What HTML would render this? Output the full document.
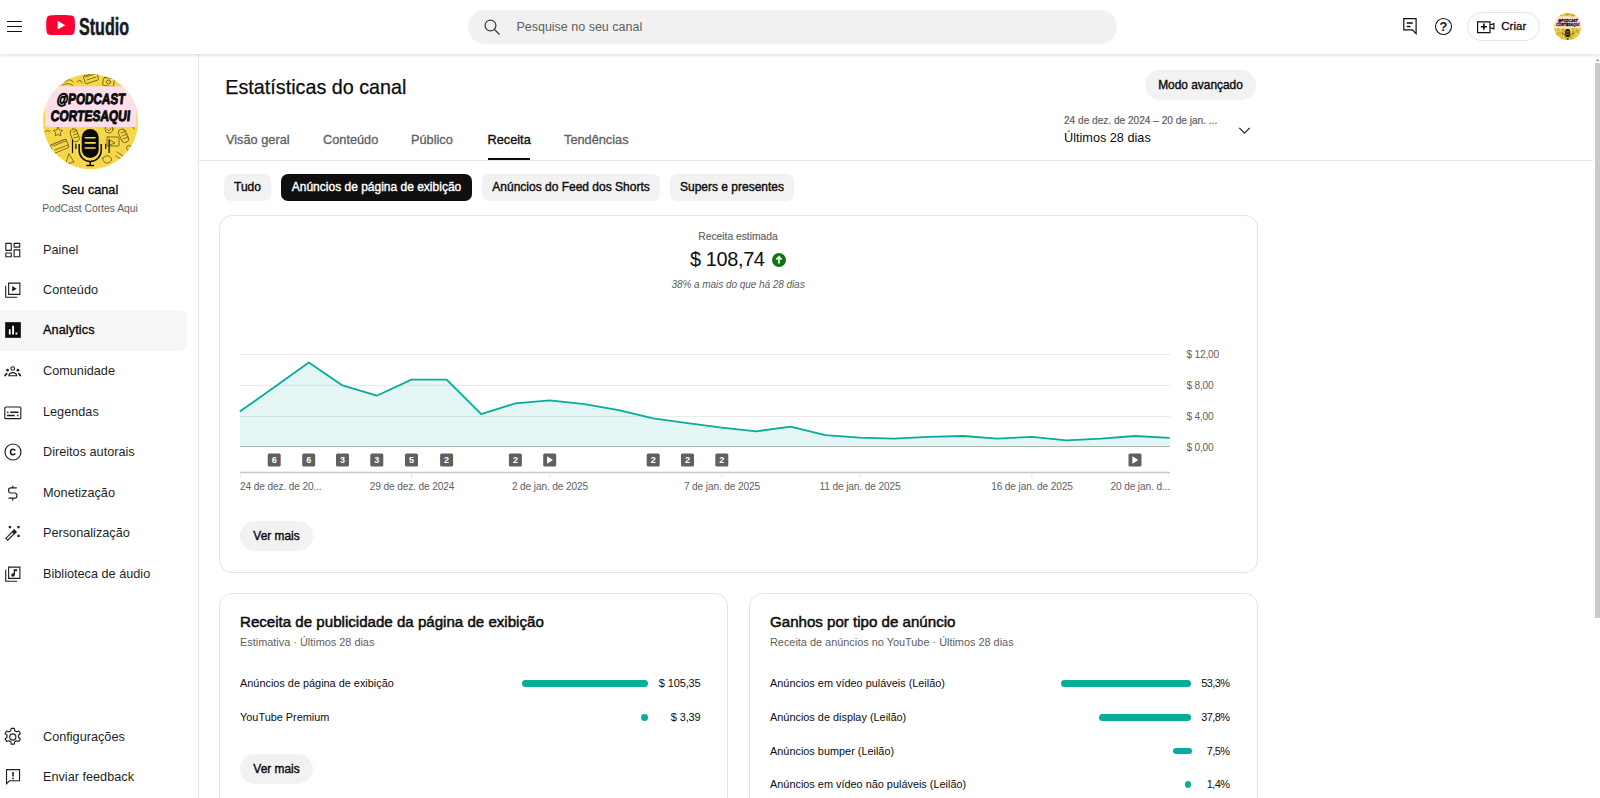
<!DOCTYPE html>
<html lang="pt-BR">
<head>
<meta charset="utf-8">
<title>Estatísticas do canal - YouTube Studio</title>
<style>
*{box-sizing:border-box;margin:0;padding:0}
html,body{width:1600px;height:798px;overflow:hidden;background:#fff}
body{font-family:"Liberation Sans",sans-serif;color:#0d0d0d;position:relative;-webkit-font-smoothing:antialiased}
.abs{position:absolute}
svg{display:block}
/* ---------- header ---------- */
#hdr{position:absolute;left:0;top:0;width:1600px;height:54px;background:#fff;z-index:5;box-shadow:0 1px 4px rgba(0,0,0,.16)}
#burger{position:absolute;left:7px;top:19px;width:15px;height:14px}
#burger i{position:absolute;left:0;width:15px;height:1px;background:#111}
#logo{position:absolute;left:46.400px;top:14.900px}
#studio{position:absolute;left:79.200px;top:12.700px;font-weight:bold;font-size:24px;color:#1a1a1a;-webkit-text-stroke:.55px #1a1a1a;transform:scaleX(.67);transform-origin:0 0;line-height:28px}
#search{position:absolute;left:468px;top:9.800px;width:648.500px;height:33.800px;border-radius:17px;background:#f1f1f1}
#search span{position:absolute;left:48.400px;top:9.900px;font-size:12.5px;color:#606060;line-height:15px}
#criar{position:absolute;left:1467.300px;top:11.600px;width:72.300px;height:29.800px;border:1px solid #e4e4e4;border-radius:15px}
#criar span{position:absolute;left:33px;top:6.600px;font-size:11.500px;-webkit-text-stroke:.3px #0d0d0d;color:#0d0d0d;line-height:15px}
/* ---------- sidebar ---------- */
#side{position:absolute;left:0;top:54px;width:198.800px;height:744px;border-right:1.600px solid #e9e9e9;background:#fff}
.nav{position:absolute;left:0;width:187px;height:40px}
.nav span{position:absolute;left:43px;top:12.500px;font-size:12.700px;line-height:16px;color:#1f1f1f;white-space:nowrap}
.nav svg{position:absolute;left:3px;top:10.500px}
.nav.sel{background:#f6f6f6;border-radius:0 8px 8px 0}
.nav.sel span{-webkit-text-stroke:.35px #0d0d0d;color:#0d0d0d;letter-spacing:.1px}
/* ---------- main ---------- */
#title{position:absolute;left:225.300px;top:75px;font-size:19.750px;line-height:24px;color:#0d0d0d;-webkit-text-stroke:.25px #0d0d0d;white-space:nowrap}
.pill{position:absolute;height:30px;border-radius:15px;background:#f2f2f2;font-size:11.9px;-webkit-text-stroke:.4px #0d0d0d;color:#0d0d0d;text-align:center;line-height:30px;white-space:nowrap}
.tab{position:absolute;top:131.500px;font-size:12.750px;line-height:16px;color:#606060;-webkit-text-stroke:.3px #606060;white-space:nowrap}
.chip{position:absolute;top:174.400px;height:27px;border-radius:7px;background:#f2f2f2;font-size:12px;-webkit-text-stroke:.38px;line-height:27px;text-align:center;color:#0d0d0d;white-space:nowrap}
.card{position:absolute;border:1px solid #e3e3e3;border-radius:13px;background:#fff}
.ct{position:absolute;font-size:15.100px;-webkit-text-stroke:.5px #0d0d0d;line-height:20px;color:#0d0d0d;white-space:nowrap}
.cs{position:absolute;font-size:10.900px;line-height:14px;color:#606060;white-space:nowrap}
.rl{position:absolute;font-size:10.900px;line-height:14px;color:#0d0d0d;white-space:nowrap}
.rv{position:absolute;font-size:10.970px;letter-spacing:-.13px;line-height:14px;color:#0d0d0d;white-space:nowrap;text-align:right;width:60px}
.rv.pv{letter-spacing:-.6px}
.bar{position:absolute;height:6.750px;border-radius:3.400px;background:#08ac9b}
.xl{position:absolute;top:480.700px;font-size:10.125px;letter-spacing:-.115px;line-height:12px;color:#606060;white-space:nowrap}
.yl{position:absolute;left:1186.500px;font-size:10.125px;letter-spacing:-.2px;line-height:12px;color:#606060;white-space:nowrap}
</style>
</head>
<body>

<svg width="0" height="0" style="position:absolute">
  <defs>
    <clipPath id="avc"><circle cx="47.500" cy="47.500" r="47.500"/></clipPath>
    <symbol id="avatar" viewBox="0 0 95 95">
      <g clip-path="url(#avc)">
        <rect width="95" height="95" fill="#f6d74a"/>
        <!-- doodles -->
        <g fill="none" stroke="#4a3d08" stroke-width=".9" stroke-opacity=".75" stroke-linecap="round" stroke-linejoin="round">
          <rect x="41" y="0" width="14" height="8" rx="1.500" transform="rotate(-18 48 4)"/>
          <path d="M43 3l9-3M44 6l9-3"/>
          <rect x="60" y="4" width="11" height="8" rx="1.500" transform="rotate(8 65 8)"/>
          <circle cx="65.500" cy="8" r="2"/>
          <path d="M22 8c2-3 6-3 8 0M20 11c3-2 8-2 10 1"/>
          <path d="M34 8l3-2 2 3"/>
          <rect x="28" y="55" width="7" height="13" rx="3.500" transform="rotate(-20 31 61)"/>
          <path d="M30 58l4-1.500M30.500 61l4-1.500M31 64l4-1.500"/>
          <path d="M15 53l1.500 3 3 .5-2.200 2.200.5 3.200-2.800-1.500-2.800 1.500.5-3.200-2.200-2.200 3-.5z"/>
          <rect x="8" y="68" width="17" height="9" rx="1.500" transform="rotate(-22 16 72)"/>
          <path d="M10 72l13-5M12 76l13-5"/>
          <rect x="77" y="55" width="7" height="14" rx="3.500" transform="rotate(-25 80 62)"/>
          <path d="M78 59l5-2M79 62l5-2M80 65l5-2"/>
          <circle cx="66" cy="55" r="4"/><path d="M64 55l2 2 2-3"/>
          <rect x="64" y="63" width="12" height="9" rx="1"/><path d="M67 66l5 3-5 2z"/>
          <path d="M26 80l5 8-8 2z"/><path d="M60 84c2-3 6-3 8 0s-2 5-4 5-5-2-4-5z"/>
          <path d="M74 78l6 4M73 82l6 4"/><circle cx="86" cy="74" r="2.500"/>
          <path d="M3 40c2-2 4-1 4 2s-2 5-4 4M2 58c1-2 4-2 5 0"/>
          <path d="M88 50l3 5M90 44l2 4"/>
        </g>
        <!-- pink banner -->
        <rect x="2" y="12.300" width="91.500" height="40.600" rx="3.500" fill="#fcdfe9"/>
        <g font-family="Liberation Sans" font-weight="bold" font-size="15" fill="#0b0b0b" stroke="#0b0b0b" stroke-width="1" stroke-linejoin="round" transform="skewX(-6) translate(3.800 0)">
          <text x="12.900" y="30.300" textLength="68.300" lengthAdjust="spacingAndGlyphs">@PODCAST</text>
          <text x="8.400" y="46.600" textLength="79.500" lengthAdjust="spacingAndGlyphs">CORTESAQUI</text>
        </g>
        <!-- microphone -->
        <rect x="38.700" y="54.900" width="17" height="29" rx="8.500" fill="#0b0b0b"/>
        <path d="M42.300 63.700h9.800M42.300 68.900h9.800M42.300 74h9.800" stroke="#f6d74a" stroke-width="1.600" stroke-linecap="round"/>
        <path d="M36.200 70v6.500a11 11 0 0 0 22 0V70" fill="none" stroke="#0b0b0b" stroke-width="1.500"/>
        <path d="M47.200 87.500v4M43.300 91.500h7.800" stroke="#0b0b0b" stroke-width="1.500"/>
        <path d="M29.500 65.600v13.500M32.900 69.700v5.400M62.700 69.700v5.400M66.100 65.600v13.500" stroke="#0b0b0b" stroke-width="1.200"/>
      </g>
    </symbol>
  </defs>
</svg>

<!-- ================= HEADER ================= -->
<div id="hdr">
  <div id="burger"><i style="top:2px"></i><i style="top:7px"></i><i style="top:12px"></i></div>
  <svg id="logo" width="29.200" height="20.400" viewBox="0 0 30 21" preserveAspectRatio="none"><path d="M29.2 3.3C28.9 2 27.9 1 26.6.6 24.3 0 15 0 15 0S5.700 0 3.400.6C2.100 1 1.100 2 .8 3.300.2 5.600.2 10.500.2 10.500s0 4.900.6 7.200c.3 1.300 1.300 2.300 2.600 2.700C5.700 21 15 21 15 21s9.300 0 11.600-.6c1.300-.4 2.300-1.400 2.600-2.700.6-2.300.6-7.200.6-7.200s0-4.900-.6-7.200z" fill="#ff0033"/><path d="M12 15l7.800-4.500L12 6z" fill="#fff"/></svg>
  <div id="studio">Studio</div>

  <div id="search">
    <svg class="abs" style="left:15px;top:8px" width="18" height="18" viewBox="0 0 18 18" fill="none" stroke="#3a3a3a" stroke-width="1.2"><circle cx="7.500" cy="7.500" r="5.400"/><path d="M11.500 11.500L16.500 16.500"/></svg>
    <span>Pesquise no seu canal</span>
  </div>

  <!-- comments icon -->
  <svg class="abs" style="left:1402px;top:17px" width="17" height="18" viewBox="0 0 17 18" fill="none" stroke="#111" stroke-width="1.200"><path d="M1.800 1.700h12.300v14.900l-3.700-3.700H1.800z"/><path d="M4.700 6h6.100M4.700 9.500h3.800" stroke-width="1.600"/></svg>
  <!-- help icon -->
  <svg class="abs" style="left:1434.400px;top:17.300px" width="19" height="19" viewBox="0 0 19 19" fill="none" stroke="#111" stroke-width="1.100"><circle cx="9.500" cy="9.500" r="8"/><text x="9.500" y="14.100" font-family="Liberation Sans" font-size="12.800" font-weight="bold" text-anchor="middle" fill="#111" stroke="none">?</text></svg>
  <div id="criar">
    <svg class="abs" style="left:8px;top:6.500px" width="20" height="16" viewBox="0 0 20 16" fill="none" stroke="#111" stroke-width="1.200"><path d="M1.600 2.900h12.400v10.700H1.600z"/><path d="M14 6l3.900-1.300v5.200L14 8.600"/><path d="M7.900 4.600v6.200M4.800 7.700h6.200" stroke-width="1.600"/></svg>
    <span>Criar</span>
  </div>
  <svg id="av2" class="abs" style="left:1554.300px;top:12.900px" width="27.500" height="27.500"><use href="#avatar"/></svg>
</div>

<!-- ================= SIDEBAR ================= -->
<div id="side">
  <svg id="av1" class="abs" style="left:42.700px;top:20.100px" width="95" height="95"><use href="#avatar"/></svg>
  <div class="abs" style="left:0;top:129px;width:180px;text-align:center;font-size:12.700px;-webkit-text-stroke:.35px #0d0d0d;line-height:15px;color:#0d0d0d">Seu canal</div>
  <div class="abs" style="left:0;top:149px;width:180px;text-align:center;font-size:10.300px;line-height:12px;color:#606060">PodCast Cortes Aqui</div>
  <div class="nav" style="top:175px"><svg width="20" height="20" viewBox="0 0 24 24" fill="none" stroke="#1f1f1f" stroke-width="1.350"><path d="M3.400 4h6.500v8.400H3.400zM13.300 4h6.800v4.500h-6.800zM3.400 15.600h6.500v4.500H3.400zM13.300 11.900h6.800v8.200h-6.800z" stroke-linejoin="round"/></svg><span>Painel</span></div>
  <div class="nav" style="top:215.500px"><svg width="20" height="20" viewBox="0 0 24 24" fill="none" stroke="#1f1f1f" stroke-width="1.350"><path d="M6.750 3.750h13.500v13.500H6.750z"/><path d="M3.250 7v13.750H17"/><path d="M11 7.200v6.600l5.400-3.300z" fill="#1f1f1f" stroke="none"/></svg><span>Conteúdo</span></div>
  <div class="nav sel" style="top:255.500px;height:41px"><svg width="20" height="20" viewBox="0 0 24 24"><path d="M2.600 2.600h18.800v18.800H2.600z" fill="#0d0d0d"/><path d="M7 11h2.200v6.500H7zM11 7h2.200v10.500H11zM15 15h2.200v2.500H15z" fill="#fff"/></svg><span>Analytics</span></div>
  <div class="nav" style="top:296.500px"><svg width="20" height="20" viewBox="0 0 24 24" fill="none" stroke="#1f1f1f" stroke-width="1.350"><circle cx="11.700" cy="9" r="2.150"/><path d="M6.900 17.700c.3-2.300 2.200-3.700 4.800-3.700s4.500 1.400 4.800 3.700z" stroke-linejoin="round"/><g fill="#1f1f1f" stroke="none"><circle cx="5.500" cy="11" r="1.600"/><circle cx="17.900" cy="11" r="1.600"/><path d="M1.400 18.300c.3-2.200 1.500-3.700 3.400-4.200l.9 1.300c-1.100.6-1.800 1.600-2 2.900zM22 18.300c-.3-2.200-1.500-3.700-3.400-4.200l-.9 1.300c1.100.6 1.800 1.600 2 2.900z"/></g></svg><span>Comunidade</span></div>
  <div class="nav" style="top:337px"><svg width="20" height="20" viewBox="0 0 24 24" fill="none" stroke="#1f1f1f" stroke-width="1.350"><rect x="2.200" y="6" width="19.200" height="14" rx="1.200"/><path d="M4.900 12.400h1.700M8.700 12.400h9.700M4.900 16.200h9M16.800 16.200h1.700" stroke-width="1.800"/></svg><span>Legendas</span></div>
  <div class="nav" style="top:377.500px"><svg width="20" height="20" viewBox="0 0 24 24" fill="none" stroke="#1f1f1f" stroke-width="1.400"><circle cx="12" cy="12" r="9.600"/><path d="M14.600 10.300c-.5-1-1.400-1.600-2.600-1.600-1.800 0-3 1.400-3 3.300s1.200 3.300 3 3.300c1.200 0 2.100-.6 2.600-1.600" stroke-width="1.900"/></svg><span>Direitos autorais</span></div>
  <div class="nav" style="top:418px"><svg width="20" height="20" viewBox="0 0 24 24" fill="none" stroke="#1f1f1f" stroke-width="1.350"><path d="M16.600 5.800H9.600a3 3 0 0 0-3 3v.2a3 3 0 0 0 3 3h4.200a3 3 0 0 1 3 3v.2a3 3 0 0 1-3 3H6.600"/><path d="M11.700 3.200v2.600M11.700 18.200v2.800" stroke-width="1.500"/></svg><span>Monetização</span></div>
  <div class="nav" style="top:458.500px"><svg width="20" height="20" viewBox="0 0 24 24" fill="none" stroke="#1f1f1f" stroke-width="1.350"><path d="M3.400 18.400l10-10 2.250 2.250-10 10z"/><path d="M11.200 10.600l2.200-2.200 2.250 2.250-2.200 2.200z" fill="#1f1f1f"/><path d="M7.100 3.800l2.400 2.400M9.500 3.800L7.100 6.200M17.400 3.800l2.400 2.400M19.800 3.800l-2.400 2.400M17.400 14.300l2.400 2.400M19.800 14.300l-2.400 2.400" stroke-width="1.500"/></svg><span>Personalização</span></div>
  <div class="nav" style="top:499px"><svg width="20" height="20" viewBox="0 0 24 24" fill="none" stroke="#1f1f1f" stroke-width="1.350"><path d="M6.750 3.750h13.500v13.500H6.750z"/><path d="M3.250 7v13.750H17"/><circle cx="11.900" cy="13.300" r="2.100" fill="#1f1f1f" stroke="none"/><path d="M12.800 6.400h4.100v2.300h-2.500v4.900h-1.600z" fill="#1f1f1f" stroke="none"/></svg><span>Biblioteca de áudio</span></div>
  <div class="nav" style="top:662px"><svg width="20" height="20" viewBox="0 0 24 24" fill="none" stroke="#1f1f1f" stroke-width="1.400"><g transform="translate(11.700 12) scale(1.090) translate(-12 -12)" stroke-width="1.250"><circle cx="12" cy="12" r="3.400"/><path d="M10.300 2.500h3.400l.5 2.700 1.900 1.100 2.600-.9 1.700 2.900-2.100 1.800v2.200l2.100 1.800-1.700 2.900-2.600-.9-1.900 1.100-.5 2.700h-3.400l-.5-2.700-1.900-1.100-2.600.9-1.700-2.900 2.100-1.800v-2.200L3.600 8.300l1.700-2.900 2.600.9 1.900-1.100z" stroke-linejoin="round"/></g></svg><span>Configurações</span></div>
  <div class="nav" style="top:702px"><svg width="20" height="20" viewBox="0 0 24 24" fill="none" stroke="#1f1f1f" stroke-width="1.350"><path d="M4.250 3.200h15.600v13.300H7.900l-3.650 3.600z"/><path d="M12 6v5.300M12 12.800v2" stroke-width="1.900"/></svg><span>Enviar feedback</span></div>
</div>

<!-- ================= MAIN ================= -->
<div id="main">
  <div id="title">Estatísticas do canal</div>
  <div class="pill" style="left:1145px;top:70px;width:111px">Modo avançado</div>

  <div class="tab" style="left:226px">Visão geral</div>
  <div class="tab" style="left:323px">Conteúdo</div>
  <div class="tab" style="left:411px">Público</div>
  <div class="tab" style="left:487.500px;color:#0d0d0d;-webkit-text-stroke:.35px #0d0d0d" id="tsel">Receita</div>
  <div class="tab" style="left:564px">Tendências</div>
  <div class="abs" style="left:488px;top:158px;width:42px;height:2px;background:#0d0d0d"></div>
  <div class="abs" style="left:199px;top:160px;width:1394px;height:1px;background:#e4e4e4"></div>

  <div class="abs dt1" style="left:1064px;top:114.700px;font-size:10.100px;-webkit-text-stroke:.2px #606060;line-height:12px;color:#606060;white-space:nowrap">24 de dez. de 2024 – 20 de jan. ...</div>
  <div class="abs dt2" style="left:1064px;top:129.500px;font-size:12.700px;line-height:16px;color:#0d0d0d;white-space:nowrap">Últimos 28 dias</div>
  <svg class="abs" style="left:1238px;top:126px" width="13" height="9" viewBox="0 0 13 9" fill="none" stroke="#222" stroke-width="1.200"><path d="M1.200 1.800l5.300 5.300 5.300-5.300"/></svg>

  <div class="chip" style="left:224px;width:47px">Tudo</div>
  <div class="chip" style="left:281px;width:191px;background:#0f0f0f;color:#fff">Anúncios de página de exibição</div>
  <div class="chip" style="left:482px;width:178px">Anúncios do Feed dos Shorts</div>
  <div class="chip" style="left:670px;width:124px">Supers e presentes</div>

  <!-- chart card -->
  <div class="card" style="left:218.600px;top:215px;width:1039.400px;height:358px"></div>
  <div class="abs k1" style="left:638px;top:231.300px;width:200px;text-align:center;font-size:10.300px;-webkit-text-stroke:.15px #606060;line-height:12px;color:#606060">Receita estimada</div>
  <div class="abs k2" style="left:690px;top:247px;font-size:19.900px;letter-spacing:-.36px;line-height:24px;color:#0d0d0d;white-space:nowrap">$ 108,74</div>
  <svg class="abs" style="left:772px;top:252.800px" width="14" height="14" viewBox="0 0 14 14"><circle cx="7" cy="7" r="7" fill="#107516"/><path d="M7 10.600V4M4.300 6.500L7 3.800l2.700 2.700" fill="none" stroke="#fff" stroke-width="1.700"/></svg>
  <div class="abs k3" style="left:588px;top:279px;width:300px;text-align:center;font-size:10.125px;letter-spacing:-.1px;line-height:12px;color:#606060;font-style:italic">38% a mais do que há 28 dias</div>

  <svg class="abs" style="left:0;top:0" width="1600" height="798" viewBox="0 0 1600 798">
    <path d="M240 354.500H1170M240 385.500H1170M240 416.500H1170" stroke="#ebebeb" stroke-width="1"/>
    <path d="M239.8 411.6 L274.2 387.3 L308.8 362.5 L342.5 385.4 L376.8 395.7 L411.5 379.6 L446.6 379.6 L481.2 414.2 L515.4 403.3 L549.7 400.4 L584.4 404.1 L618.7 410.1 L653.2 418.4 L687.5 423.2 L721.8 427.6 L756.3 431.3 L790.6 426.6 L825.3 435.1 L860.0 437.7 L893.8 438.6 L928.4 436.9 L963.1 436.0 L997.4 438.6 L1031.9 436.9 L1066.4 440.3 L1101.2 438.6 L1135.0 436.0 L1169.7 437.9 L1169.7 446.5 L239.8 446.5 Z" fill="#08ac9b" fill-opacity=".11"/>
    <path d="M240 446.500H1170" stroke="#a8b5b3" stroke-width="1"/>
    <path d="M239.8 411.6 L274.2 387.3 L308.8 362.5 L342.5 385.4 L376.8 395.7 L411.5 379.6 L446.6 379.6 L481.2 414.2 L515.4 403.3 L549.7 400.4 L584.4 404.1 L618.7 410.1 L653.2 418.4 L687.5 423.2 L721.8 427.6 L756.3 431.3 L790.6 426.6 L825.3 435.1 L860.0 437.7 L893.8 438.6 L928.4 436.9 L963.1 436.0 L997.4 438.6 L1031.9 436.9 L1066.4 440.3 L1101.2 438.6 L1135.0 436.0 L1169.7 437.9" fill="none" stroke="#08ac9b" stroke-width="1.800" stroke-linejoin="round"/>
    <rect x="267.7" y="453.500" width="13" height="13" rx="1.500" fill="#606060"/><text x="274.2" y="463.400" font-family="Liberation Sans" font-size="9" font-weight="bold" text-anchor="middle" fill="#fff">6</text><rect x="302.2" y="453.500" width="13" height="13" rx="1.500" fill="#606060"/><text x="308.8" y="463.400" font-family="Liberation Sans" font-size="9" font-weight="bold" text-anchor="middle" fill="#fff">6</text><rect x="336.0" y="453.500" width="13" height="13" rx="1.500" fill="#606060"/><text x="342.5" y="463.400" font-family="Liberation Sans" font-size="9" font-weight="bold" text-anchor="middle" fill="#fff">3</text><rect x="370.3" y="453.500" width="13" height="13" rx="1.500" fill="#606060"/><text x="376.8" y="463.400" font-family="Liberation Sans" font-size="9" font-weight="bold" text-anchor="middle" fill="#fff">3</text><rect x="405.0" y="453.500" width="13" height="13" rx="1.500" fill="#606060"/><text x="411.5" y="463.400" font-family="Liberation Sans" font-size="9" font-weight="bold" text-anchor="middle" fill="#fff">5</text><rect x="440.1" y="453.500" width="13" height="13" rx="1.500" fill="#606060"/><text x="446.6" y="463.400" font-family="Liberation Sans" font-size="9" font-weight="bold" text-anchor="middle" fill="#fff">2</text><rect x="508.9" y="453.500" width="13" height="13" rx="1.500" fill="#606060"/><text x="515.4" y="463.400" font-family="Liberation Sans" font-size="9" font-weight="bold" text-anchor="middle" fill="#fff">2</text><rect x="543.2" y="453.500" width="13" height="13" rx="1.500" fill="#606060"/><path d="M547.1 456.3v7.400l5.800-3.700z" fill="#fff"/><rect x="646.7" y="453.500" width="13" height="13" rx="1.500" fill="#606060"/><text x="653.2" y="463.400" font-family="Liberation Sans" font-size="9" font-weight="bold" text-anchor="middle" fill="#fff">2</text><rect x="681.0" y="453.500" width="13" height="13" rx="1.500" fill="#606060"/><text x="687.5" y="463.400" font-family="Liberation Sans" font-size="9" font-weight="bold" text-anchor="middle" fill="#fff">2</text><rect x="715.3" y="453.500" width="13" height="13" rx="1.500" fill="#606060"/><text x="721.8" y="463.400" font-family="Liberation Sans" font-size="9" font-weight="bold" text-anchor="middle" fill="#fff">2</text><rect x="1128.5" y="453.500" width="13" height="13" rx="1.500" fill="#606060"/><path d="M1132.4 456.3v7.400l5.800-3.700z" fill="#fff"/>
    <path d="M240 472.500H1170" stroke="#c8c8c8" stroke-width="1.400"/>
    <path d="M240.3 473v4.500" stroke="#e4e4e4" stroke-width="1"/><path d="M411.5 473v4.500" stroke="#e4e4e4" stroke-width="1"/><path d="M549.7 473v4.500" stroke="#e4e4e4" stroke-width="1"/><path d="M721.8 473v4.500" stroke="#e4e4e4" stroke-width="1"/><path d="M860.0 473v4.500" stroke="#e4e4e4" stroke-width="1"/><path d="M1031.9 473v4.500" stroke="#e4e4e4" stroke-width="1"/><path d="M1169.2 473v4.500" stroke="#e4e4e4" stroke-width="1"/>
  </svg>
  <div class="yl" style="top:348.800px">$ 12,00</div>
  <div class="yl" style="top:379.800px">$ 8,00</div>
  <div class="yl" style="top:410.600px">$ 4,00</div>
  <div class="yl" style="top:441.800px">$ 0,00</div>

  <div class="xl" style="left:240px">24 de dez. de 20...</div>
  <div class="xl xc" style="left:332px;width:160px;text-align:center">29 de dez. de 2024</div>
  <div class="xl xc" style="left:470px;width:160px;text-align:center">2 de jan. de 2025</div>
  <div class="xl xc" style="left:642px;width:160px;text-align:center">7 de jan. de 2025</div>
  <div class="xl xc" style="left:780px;width:160px;text-align:center">11 de jan. de 2025</div>
  <div class="xl xc" style="left:952px;width:160px;text-align:center">16 de jan. de 2025</div>
  <div class="xl" style="left:1010px;width:160px;text-align:right">20 de jan. d...</div>

  <div class="pill" style="left:240px;top:521.400px;width:73px">Ver mais</div>

  <!-- bottom-left card -->
  <div class="card" style="left:218.600px;top:593px;width:509.400px;height:240px"></div>
  <div class="ct" style="left:240px;top:612px">Receita de publicidade da página de exibição</div>
  <div class="cs" style="left:240px;top:635px">Estimativa · Últimos 28 dias</div>
  <div class="rl" style="left:240px;top:676px">Anúncios de página de exibição</div>
  <div class="bar" style="left:522px;top:680px;width:126.200px"></div>
  <div class="rv" style="left:640.500px;top:676px">$ 105,35</div>
  <div class="rl" style="left:240px;top:709.750px">YouTube Premium</div>
  <div class="bar" style="left:641.200px;top:713.750px;width:6.800px"></div>
  <div class="rv" style="left:640.500px;top:709.750px">$ 3,39</div>
  <div class="pill" style="left:240px;top:754.300px;width:73px">Ver mais</div>

  <!-- bottom-right card -->
  <div class="card" style="left:749px;top:593px;width:509px;height:240px"></div>
  <div class="ct" style="left:770px;top:612px">Ganhos por tipo de anúncio</div>
  <div class="cs" style="left:770px;top:635px">Receita de anúncios no YouTube · Últimos 28 dias</div>
  <div class="rl" style="left:770px;top:676px">Anúncios em vídeo puláveis (Leilão)</div>
  <div class="bar" style="left:1060.700px;top:680px;width:130.800px"></div>
  <div class="rv pv" style="left:1169.400px;top:676px">53,3%</div>
  <div class="rl" style="left:770px;top:709.750px">Anúncios de display (Leilão)</div>
  <div class="bar" style="left:1098.800px;top:713.750px;width:92.700px"></div>
  <div class="rv pv" style="left:1169.400px;top:709.750px">37,8%</div>
  <div class="rl" style="left:770px;top:743.500px">Anúncios bumper (Leilão)</div>
  <div class="bar" style="left:1173px;top:747.500px;width:18.500px"></div>
  <div class="rv pv" style="left:1169.400px;top:743.500px">7,5%</div>
  <div class="rl" style="left:770px;top:777.250px">Anúncios em vídeo não puláveis (Leilão)</div>
  <div class="bar" style="left:1184.700px;top:781.250px;width:6.800px"></div>
  <div class="rv pv" style="left:1169.400px;top:777.250px">1,4%</div>

  <!-- scrollbar -->
  <div class="abs" style="left:1595px;top:63px;width:5px;height:555px;background:#cbcbcb"></div>
  <svg class="abs" style="left:1595px;top:57.500px" width="5" height="4" viewBox="0 0 5 4"><path d="M.5 3.300l2.200-2.600 2.200 2.600z" fill="#a3a3a3"/></svg>
</div>

</body>
</html>
